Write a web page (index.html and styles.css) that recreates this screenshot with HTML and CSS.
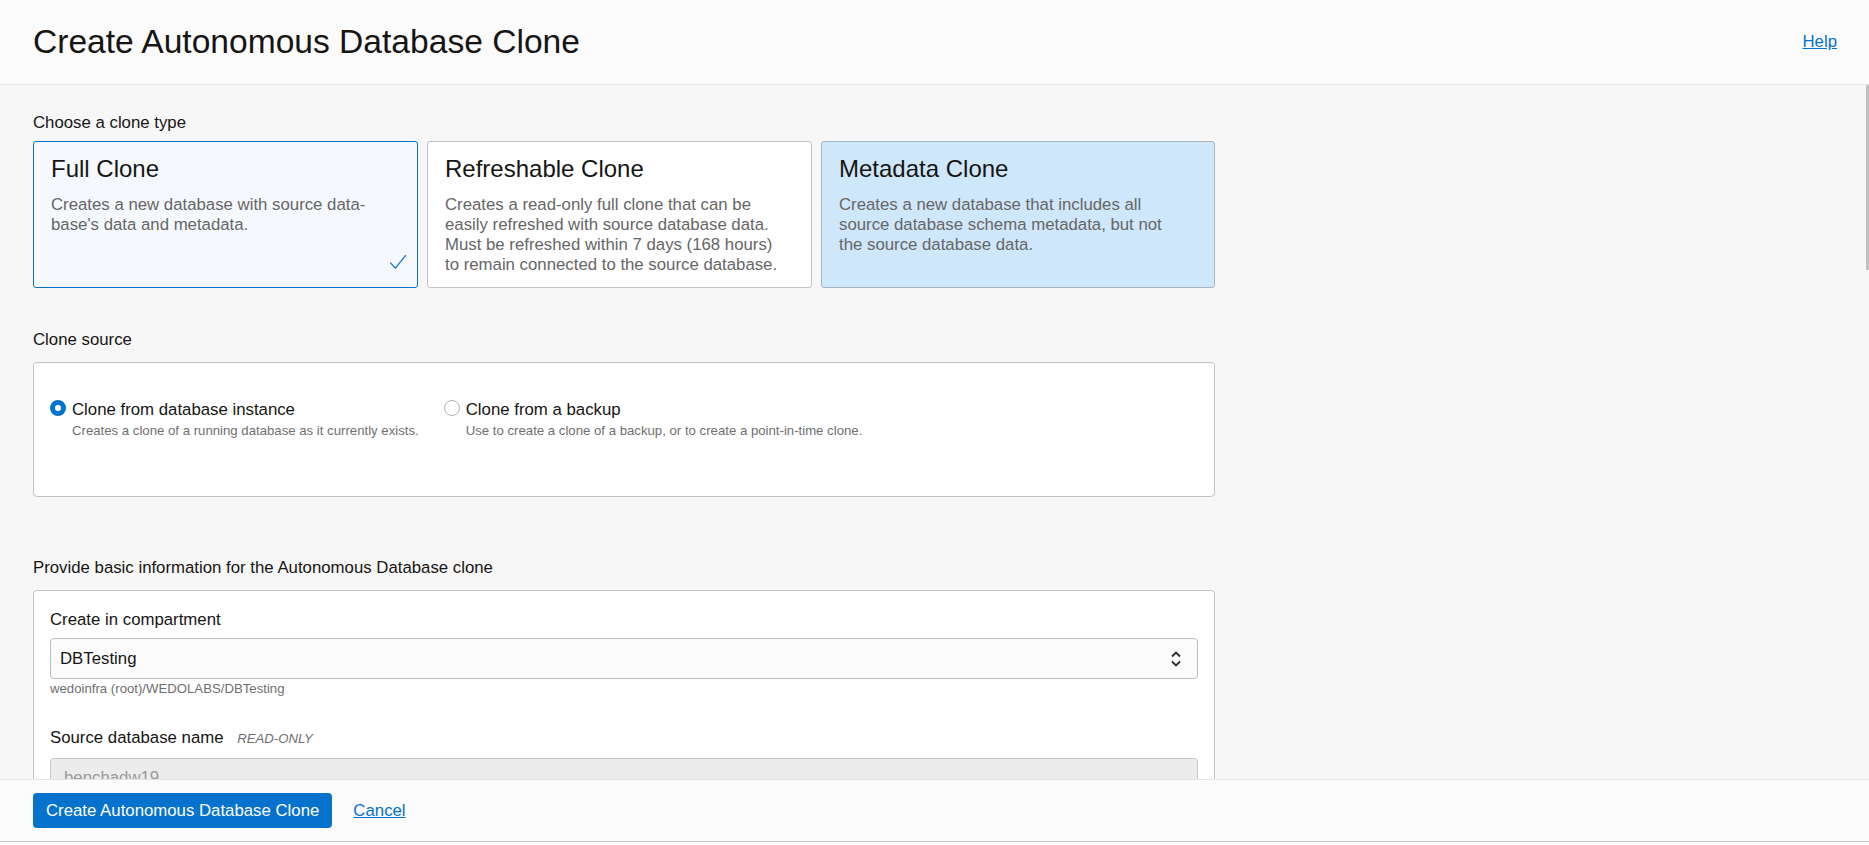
FILE: index.html
```html
<!DOCTYPE html>
<html lang="en">
<head>
<meta charset="utf-8">
<title>Create Autonomous Database Clone</title>
<link rel="stylesheet" href="styles.css">
</head>
<body>
  <header class="panel-header">
    <h1 class="panel-title">Create Autonomous Database Clone</h1>
    <a class="help-link" href="#">Help</a>
  </header>

  <main class="panel-body">
    <div class="scroll-thumb"></div>

    <section class="section">
      <div class="section-label label-tight">Choose a clone type</div>
      <div class="card-row">
        <div class="card card-selected">
          <div class="card-title">Full Clone</div>
          <div class="card-desc">Creates a new database with source data-<br>base's data and metadata.</div>
          <svg class="card-check" width="18" height="16" viewBox="0 0 18 16" aria-hidden="true">
            <path d="M1.2 8.6 L6.4 14.2 L16.8 1.2" fill="none" stroke="#1a7ad4" stroke-width="1.3"/>
          </svg>
        </div>
        <div class="card">
          <div class="card-title">Refreshable Clone</div>
          <div class="card-desc">Creates a read-only full clone that can be<br>easily refreshed with source database data.<br>Must be refreshed within 7 days (168 hours)<br>to remain connected to the source database.</div>
        </div>
        <div class="card card-hover">
          <div class="card-title">Metadata Clone</div>
          <div class="card-desc">Creates a new database that includes all<br>source database schema metadata, but not<br>the source database data.</div>
        </div>
      </div>
    </section>

    <section class="section section-gap">
      <div class="section-label">Clone source</div>
      <div class="box radio-box">
        <div class="radio-item">
          <span class="radio radio-on"></span>
          <div class="radio-text">
            <div class="radio-label">Clone from database instance</div>
            <div class="radio-desc">Creates a clone of a running database as it currently exists.</div>
          </div>
        </div>
        <div class="radio-item">
          <span class="radio"></span>
          <div class="radio-text">
            <div class="radio-label">Clone from a backup</div>
            <div class="radio-desc">Use to create a clone of a backup, or to create a point-in-time clone.</div>
          </div>
        </div>
      </div>
    </section>

    <section class="section section-gap-lg">
      <div class="section-label">Provide basic information for the Autonomous Database clone</div>
      <div class="box form-box">
        <div class="field">
          <div class="field-label">Create in compartment</div>
          <div class="select">
            <span class="select-value">DBTesting</span>
            <svg class="select-icon" width="12" height="20" viewBox="0 0 12 20" aria-hidden="true">
              <path d="M2 7.5 L6 3.5 L10 7.5" fill="none" stroke="#2b2b2b" stroke-width="1.8"/>
              <path d="M2 12.5 L6 16.5 L10 12.5" fill="none" stroke="#2b2b2b" stroke-width="1.8"/>
            </svg>
          </div>
          <div class="field-hint">wedoinfra (root)/WEDOLABS/DBTesting</div>
        </div>
        <div class="field field-next">
          <div class="field-label">Source database name <span class="readonly-tag">READ-ONLY</span></div>
          <div class="input input-readonly">benchadw19</div>
        </div>
      </div>
    </section>
  </main>

  <footer class="panel-footer">
    <button class="btn-primary" type="button">Create Autonomous Database Clone</button>
    <a class="cancel-link" href="#">Cancel</a>
  </footer>
</body>
</html>
```

FILE: styles.css
```css
html, body {
  height: 100%;
}

body {
  margin: 0;
  display: flex;
  flex-direction: column;
  background: #fbfbfb;
  font-family: "Liberation Sans", Arial, sans-serif;
  color: #161513;
  overflow: hidden;
}

.panel-header {
  flex: 0 0 84px;
  display: flex;
  align-items: center;
  justify-content: space-between;
  padding: 0 32px 0 33px;
  background: #fbfbfb;
  border-bottom: 1px solid #e4e4e4;
}

.panel-title {
  margin: 0;
  font-size: 33.6px;
  line-height: 40px;
  font-weight: 400;
  color: #161513;
}

.help-link {
  font-size: 16.8px;
  line-height: 20px;
  color: #0572ce;
  text-decoration: underline;
}

.panel-body {
  position: relative;
  flex: 1 1 auto;
  min-height: 0;
  overflow: hidden;
  background: #f7f7f7;
  padding: 27.5px 33px 0 33px;
}

.scroll-thumb {
  position: absolute;
  top: 0;
  right: 0;
  width: 3px;
  height: 185px;
  background: #c1c1c1;
}

.section {
  width: 1182px;
}

.section-gap {
  margin-top: 42px;
}

.section-gap-lg {
  margin-top: 61px;
}

.section-label {
  font-size: 16.8px;
  line-height: 20px;
  margin-bottom: 12px;
  color: #161513;
}

.label-tight {
  margin-bottom: 8px;
}

.card-row {
  display: grid;
  grid-template-columns: 385px 385px 1fr;
  column-gap: 9px;
}

.card {
  position: relative;
  background: #ffffff;
  border: 1px solid #bcc3ca;
  border-radius: 3px;
  padding: 13px 16px 12px 17px;
}

.card-selected {
  background: #f5f9fd;
  border-color: #0572ce;
}

.card-hover {
  background: #cfe7fb;
  border-color: #a9b6c2;
}

.card-title {
  font-size: 24px;
  line-height: 28px;
  margin-bottom: 12px;
  color: #161513;
}

.card-desc {
  font-size: 16.8px;
  line-height: 20px;
  color: #666666;
}

.card-check {
  position: absolute;
  right: 10px;
  bottom: 17px;
}

.box {
  background: #ffffff;
  border: 1px solid #bcc3ca;
  border-radius: 4px;
}

.radio-box {
  display: flex;
  column-gap: 25px;
  padding: 37px 16px 57px 16px;
}

.radio-item {
  display: flex;
  align-items: flex-start;
  column-gap: 6px;
}

.radio {
  flex: 0 0 auto;
  box-sizing: border-box;
  width: 16px;
  height: 16px;
  margin-top: 0.5px;
  border-radius: 50%;
  border: 1px solid #b3b3b3;
  background: #ffffff;
}

.radio-on {
  border: 5.5px solid #0572ce;
  background: #ffffff;
}

.radio-label {
  font-size: 16.8px;
  line-height: 20px;
  color: #161513;
}

.radio-desc {
  margin-top: 3px;
  font-size: 13.2px;
  line-height: 16px;
  color: #6f6f6f;
}

.form-box {
  padding: 19px 16px 40px 16px;
}

.field-label {
  font-size: 16.8px;
  line-height: 20px;
  color: #161513;
  margin-bottom: 8.5px;
}

.readonly-tag {
  margin-left: 9px;
  font-size: 13.2px;
  font-style: italic;
  color: #6f6f6f;
}

.select {
  box-sizing: border-box;
  height: 41px;
  display: flex;
  align-items: center;
  justify-content: space-between;
  padding: 0 15px 0 9px;
  background: #fbfbfb;
  border: 1px solid #b8bfc7;
  border-radius: 4px;
}

.select-value {
  font-size: 16.8px;
  color: #161513;
}

.select-icon {
  display: block;
}

.field-hint {
  margin-top: 1.5px;
  font-size: 13.2px;
  line-height: 16px;
  color: #6f6f6f;
}

.field-next {
  margin-top: 31.5px;
}

.input {
  box-sizing: border-box;
  height: 41px;
  display: flex;
  align-items: center;
  padding: 0 13px;
  border-radius: 4px;
  font-size: 16.8px;
}

.input-readonly {
  background: #ececec;
  border: 1px solid #c6c9cc;
  color: #9a9a9a;
}

.panel-footer {
  flex: 0 0 auto;
  display: flex;
  align-items: center;
  column-gap: 21px;
  padding: 13px 33px;
  margin-bottom: 3px;
  background: #fbfbfb;
  border-top: 1px solid #e4e4e4;
  border-bottom: 1px solid #c4c7cb;
}

.btn-primary {
  height: 35px;
  padding: 0 13px;
  border: none;
  border-radius: 4px;
  background: #0572ce;
  color: #ffffff;
  font-family: "Liberation Sans", Arial, sans-serif;
  font-size: 16.8px;
  cursor: pointer;
}

.cancel-link {
  font-size: 16.8px;
  color: #0572ce;
  text-decoration: underline;
}
```
